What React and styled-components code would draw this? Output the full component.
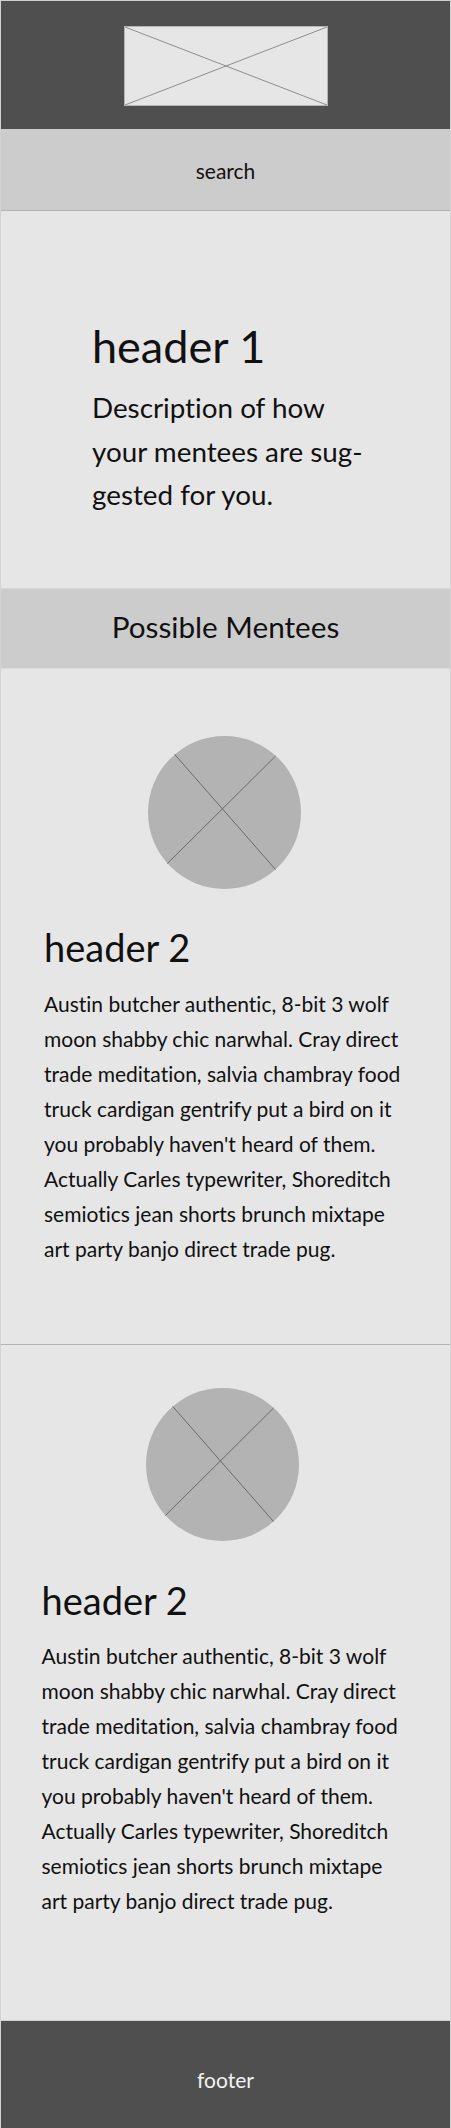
import React from "react";
import styled, { createGlobalStyle } from "styled-components";

const Global = createGlobalStyle`
  html, body { margin: 0; padding: 0; background: #e6e6e6; }
  body {
    font-family: Lato, "Open Sans", "Liberation Sans", sans-serif;
    color: #111;
    font-variant-ligatures: none;
    font-feature-settings: "liga" 0, "clig" 0;
  }
  * { box-sizing: border-box; }
`;

const Page = styled.div`
  width: 451px;
  display: flex;
  flex-direction: column;
  border-left: 1px solid #d2d2d2;
  border-right: 1px solid #d2d2d2;
`;

const TopBar = styled.header`
  height: 129px;
  background: #4f4f4f;
  border-top: 1px solid #cfcfcf;
  display: flex;
  align-items: center;
  justify-content: center;
`;

const LogoBox = styled.div`
  width: 204px;
  height: 80px;
  background: #e6e6e6;
  border: 1px solid #b5b5b5;
  margin-top: 1px;
  svg { display: block; width: 100%; height: 100%; }
`;

const GreyBar = styled.div`
  height: ${(p) => p.$h}px;
  background: #cccccc;
  display: flex;
  align-items: center;
  justify-content: center;
  font-size: ${(p) => p.$size}px;
  padding-bottom: ${(p) => p.$pb || 0}px;
  border-top: 1px solid ${(p) => p.$topLine || "#cccccc"};
  border-bottom: 1px solid ${(p) => p.$bottomLine || "#cccccc"};
`;

const Intro = styled.section`
  padding: 108px 20px 71px 91px;
  background: #e6e6e6;
`;

const H1 = styled.h1`
  margin: 0;
  font-weight: 400;
  font-size: 45px;
  line-height: 54px;
  white-space: nowrap;
`;

const Lead = styled.p`
  margin: 13px 0 0;
  font-size: 27.8px;
  line-height: 43.5px;
  white-space: nowrap;
`;

const Card = styled.article`
  background: #e6e6e6;
  padding-top: ${(p) => p.$pt}px;
  padding-bottom: ${(p) => p.$pb}px;
  padding-left: ${(p) => p.$pl}px;
  border-bottom: 1px solid ${(p) => p.$line};
`;

const CardInner = styled.div`
  width: 361px;
  display: flex;
  flex-direction: column;
`;

const Avatar = styled.div`
  width: 153px;
  height: 153px;
  align-self: center;
  svg { display: block; }
`;

const H2 = styled.h2`
  margin: 35.8px 0 0;
  font-weight: 400;
  font-size: 38px;
  line-height: 46.8px;
  white-space: nowrap;
`;

const Body = styled.p`
  margin: 14.7px 0 0;
  font-size: 21px;
  line-height: 35px;
  white-space: nowrap;
`;

const Footer = styled.footer`
  height: 107px;
  background: #4f4f4f;
  color: #f2f2f2;
  font-size: 21px;
  display: flex;
  align-items: center;
  justify-content: center;
  padding-top: 10px;
`;

const lines = [
  "Austin butcher authentic, 8-bit 3 wolf",
  "moon shabby chic narwhal. Cray direct",
  "trade meditation, salvia chambray food",
  "truck cardigan gentrify put a bird on it",
  "you probably haven't heard of them.",
  "Actually Carles typewriter, Shoreditch",
  "semiotics jean shorts brunch mixtape",
  "art party banjo direct trade pug.",
];

function Placeholder() {
  return (
    <svg width="153" height="153" viewBox="0 0 153 153">
      <circle cx="76.5" cy="76.5" r="76.5" fill="#b3b3b3" />
      <line x1="26.6" y1="18.3" x2="127.6" y2="133.6" stroke="#6a6a6a" strokeWidth="1" />
      <line x1="127.6" y1="20" x2="19.3" y2="127.6" stroke="#6a6a6a" strokeWidth="1" />
    </svg>
  );
}

function Mentee({ pt, pb, pl, line }) {
  return (
    <Card $pt={pt} $pb={pb} $pl={pl} $line={line}>
      <CardInner>
        <Avatar>
          <Placeholder />
        </Avatar>
        <H2>header 2</H2>
        <Body>
          {lines.map((l, i) => (
            <React.Fragment key={i}>
              {l}
              {i < lines.length - 1 && <br />}
            </React.Fragment>
          ))}
        </Body>
      </CardInner>
    </Card>
  );
}

export default function App() {
  return (
    <>
      <Global />
      <Page>
        <TopBar>
          <LogoBox>
            <svg viewBox="0 0 100 100" preserveAspectRatio="none">
              <line x1="0" y1="0" x2="100" y2="100" stroke="#8e8e8e" strokeWidth="1" vectorEffect="non-scaling-stroke" />
              <line x1="100" y1="0" x2="0" y2="100" stroke="#8e8e8e" strokeWidth="1" vectorEffect="non-scaling-stroke" />
            </svg>
          </LogoBox>
        </TopBar>
        <GreyBar $h={82} $size={21} $pb={0} $bottomLine="#b3b3b3">search</GreyBar>
        <Intro>
          <H1>header 1</H1>
          <Lead>
            Description of how
            <br />
            your mentees are sug-
            <br />
            gested for you.
          </Lead>
        </Intro>
        <GreyBar $h={81} $size={29.7} $pb={4} $topLine="#d9d9d9" $bottomLine="#d9d9d9">
          Possible Mentees
        </GreyBar>
        <Mentee pt={67} pb={78} pl={43} line="#b3b3b3" />
        <Mentee pt={43} pb={102} pl={40.5} line="#cfcfcf" />
        <Footer>footer</Footer>
      </Page>
    </>
  );
}
